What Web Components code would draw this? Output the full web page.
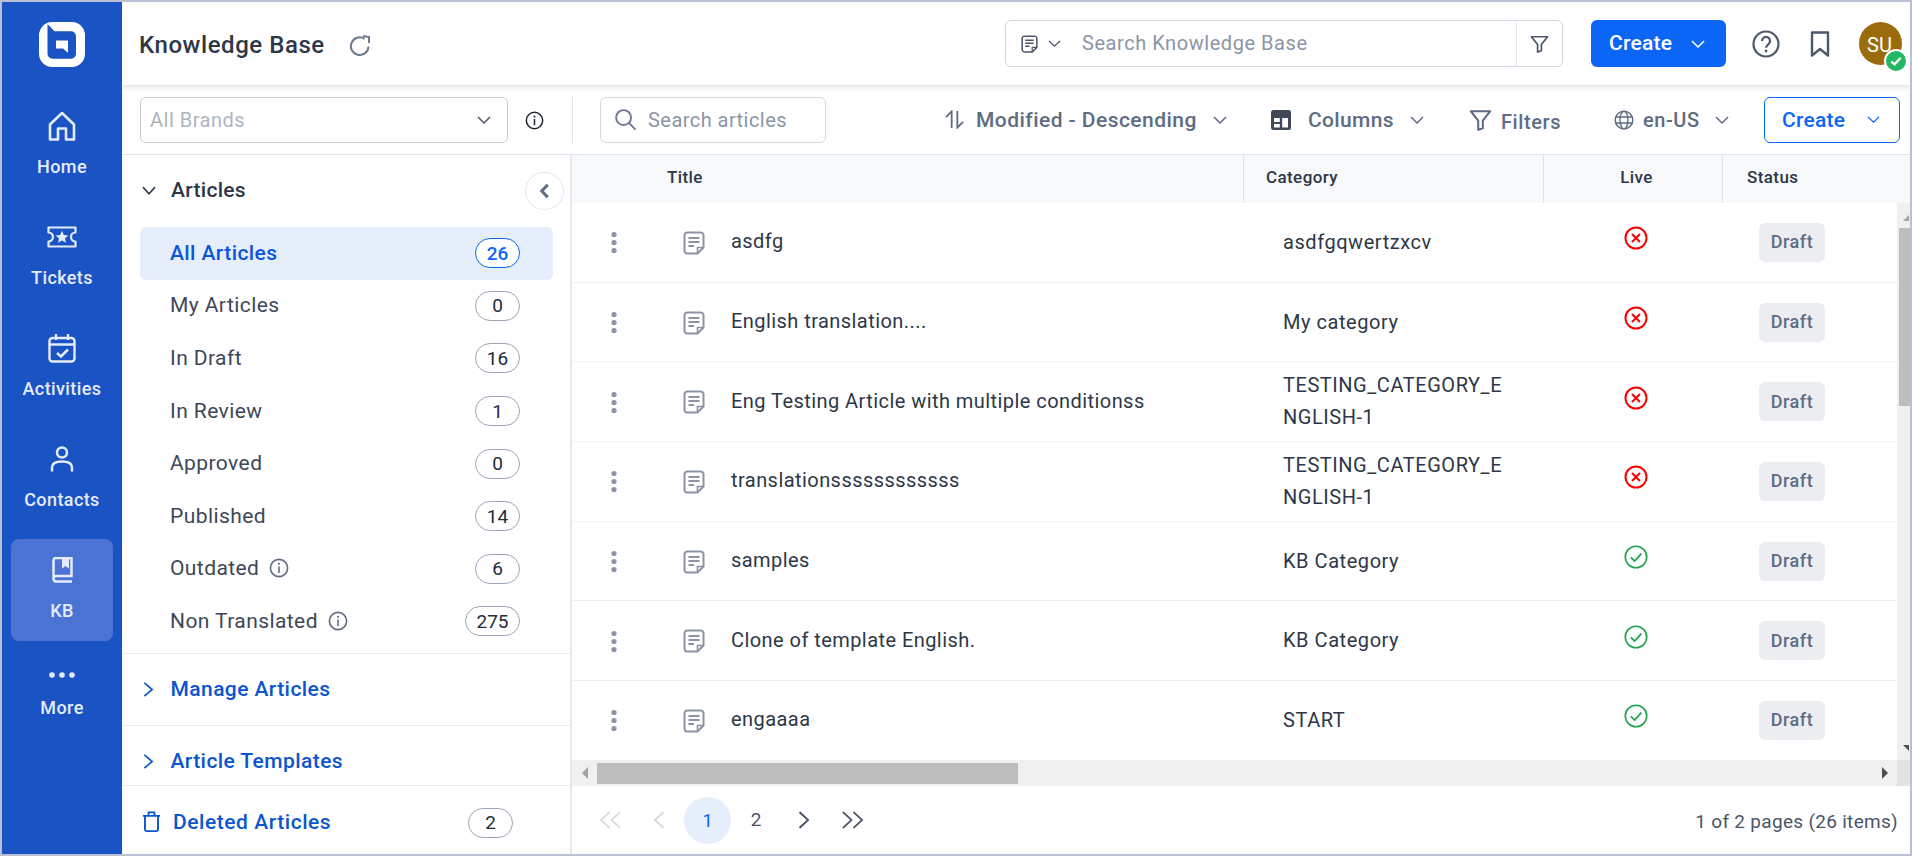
<!DOCTYPE html>
<html><head><meta charset="utf-8"><title>Knowledge Base</title>
<style>
html,body{margin:0;padding:0;height:100%;background:#fff;overflow:hidden;font-family:Roboto,"Liberation Sans",sans-serif}
</style></head>
<body>
<kb-app>
  <kb-rail slot="rail">
    <rail-item icon="home" label="Home"></rail-item>
    <rail-item icon="ticket" label="Tickets"></rail-item>
    <rail-item icon="calendar" label="Activities"></rail-item>
    <rail-item icon="contact" label="Contacts"></rail-item>
    <rail-item icon="book" label="KB" active></rail-item>
    <rail-item icon="dots" label="More" compact></rail-item>
  </kb-rail>
  <kb-header slot="header"></kb-header>
  <kb-toolbar slot="toolbar"></kb-toolbar>
  <kb-nav slot="nav">
    <nav-item label="All Articles" count="26" active></nav-item>
    <nav-item label="My Articles" count="0"></nav-item>
    <nav-item label="In Draft" count="16"></nav-item>
    <nav-item label="In Review" count="1"></nav-item>
    <nav-item label="Approved" count="0"></nav-item>
    <nav-item label="Published" count="14"></nav-item>
    <nav-item label="Outdated" count="6" info></nav-item>
    <nav-item label="Non Translated" count="275" info></nav-item>
  </kb-nav>
  <kb-table slot="table">
    <kb-row name="asdfg" cat="asdfgqwertzxcv"></kb-row>
    <kb-row name="English translation...." cat="My category"></kb-row>
    <kb-row name="Eng Testing Article with multiple conditionss" cat="TESTING_CATEGORY_ENGLISH-1"></kb-row>
    <kb-row name="translationssssssssssss" cat="TESTING_CATEGORY_ENGLISH-1"></kb-row>
    <kb-row name="samples" cat="KB Category" live></kb-row>
    <kb-row name="Clone of template English." cat="KB Category" live></kb-row>
    <kb-row name="engaaaa" cat="START" live></kb-row>
  </kb-table>
  <kb-pager slot="pager"></kb-pager>
</kb-app>
<script>
const ICONS={
 logo:['0 0 46 44','<rect width="46" height="44" rx="13" fill="#fff"/><path d="M8.5 2L15.5 9H32a5 5 0 0 1 5 5V31a5 5 0 0 1-5 5H13.5a5 5 0 0 1-5-5Z" fill="#1a53c4"/><path d="M17 18H29V30L24 26H17Z" fill="#fff"/>'],
 home:['0 0 28 30','<path d="M2 13.5L14 2L26 13.5V28.5H18V17.5H10V28.5H2Z" fill="none" stroke="currentColor" stroke-width="2.6" stroke-linejoin="round"/>'],
 ticket:['0 0 30 22','<path d="M1.5 1.5H28.5V6.5a4.5 4.5 0 0 0 0 9V20.5H1.5V15.5a4.5 4.5 0 0 0 0-9Z" fill="none" stroke="currentColor" stroke-width="2.2" stroke-linejoin="round"/><path d="M15 4.8L16.9 8.9 21.3 9.4 18 12.4 19 16.8 15 14.5 11 16.8 12 12.4 8.7 9.4 13.1 8.9Z" fill="currentColor"/>'],
 calendar:['0 0 28 30','<rect x="1.5" y="5" width="25" height="23.5" rx="3" fill="none" stroke="currentColor" stroke-width="2.4"/><path d="M1.5 11.5H26.5M8 1V7M20 1V7" fill="none" stroke="currentColor" stroke-width="2.4"/><path d="M9 20L13 23.5L20 16.5" fill="none" stroke="currentColor" stroke-width="2.6"/>'],
 contact:['0 0 24 26','<circle cx="12" cy="6.5" r="5" fill="none" stroke="currentColor" stroke-width="2.5"/><path d="M2 25.5V21.5C2 17.5 6 15.5 12 15.5S22 17.5 22 21.5V25.5" fill="none" stroke="currentColor" stroke-width="2.5"/>'],
 book:['0 0 22 26','<path d="M2.5 20V3.5A2.5 2.5 0 0 1 5 1H20.5V19H5A2.8 2.8 0 0 0 2.5 22A2.8 2.8 0 0 0 5 24.5H21" fill="none" stroke="currentColor" stroke-width="2.5"/><path d="M11 1H18V11.5L14.5 9L11 11.5Z" fill="currentColor"/>'],
 dots:['0 0 26 6','<circle cx="3" cy="3" r="2.8" fill="currentColor"/><circle cx="13" cy="3" r="2.8" fill="currentColor"/><circle cx="23" cy="3" r="2.8" fill="currentColor"/>'],
 refresh:['0 0 22 22','<path d="M19.5 11.5A8.8 8.8 0 1 1 15.5 3.8" fill="none" stroke="currentColor" stroke-width="2"/><path d="M14 1L20 2V8" fill="none" stroke="currentColor" stroke-width="2"/>'],
 doc:['0 0 22 24','<path d="M14.5 22.5H4A3 3 0 0 1 1.5 20V4A3 3 0 0 1 4 1.5H18A3 3 0 0 1 20.5 4V16.5Z" fill="none" stroke="currentColor" stroke-width="2"/><path d="M14.5 22.5V16.5H20.5" fill="none" stroke="currentColor" stroke-width="1.6"/><path d="M5.5 7H16.5M5.5 11H16.5M5.5 15H11" fill="none" stroke="currentColor" stroke-width="2"/>'],
 funnel:['0 0 20 20','<path d="M1.5 2H18.5L12 10.5V17.5L8 19V10.5Z" fill="none" stroke="currentColor" stroke-width="1.8" stroke-linejoin="round"/>'],
 help:['0 0 28 28','<circle cx="14" cy="14" r="12.5" fill="none" stroke="currentColor" stroke-width="2.2"/><path d="M10 11a4 4 0 1 1 6.5 3.1c-1.5 1.1-2.5 1.9-2.5 3.6" fill="none" stroke="currentColor" stroke-width="2.2"/><circle cx="14" cy="21" r="1.4" fill="currentColor"/>'],
 bookmark:['0 0 20 26','<path d="M2 1.5H18V24.5L10 18L2 24.5Z" fill="none" stroke="currentColor" stroke-width="2.4" stroke-linejoin="round"/>'],
 info:['0 0 20 20','<circle cx="10" cy="10" r="8.6" fill="none" stroke="currentColor" stroke-width="1.6"/><path d="M10 8.5V15" stroke="currentColor" stroke-width="1.6"/><circle cx="10" cy="5.8" r="1.1" fill="currentColor"/>'],
 search:['0 0 24 24','<circle cx="10" cy="10" r="7.8" fill="none" stroke="currentColor" stroke-width="2"/><path d="M15.8 15.8L22.5 22.5" stroke="currentColor" stroke-width="2"/>'],
 sort:['0 0 20 20','<path d="M7 19V1.5L1 7.5" fill="none" stroke="currentColor" stroke-width="1.9"/><path d="M13 1V18.5L19 12.5" fill="none" stroke="currentColor" stroke-width="1.9"/>'],
 columns:['0 0 20 20','<rect width="20" height="20" rx="2.5" fill="currentColor"/><rect x="3" y="8" width="5.8" height="4" fill="#fff"/><rect x="3" y="14" width="5.8" height="3.5" fill="#fff"/><rect x="11.2" y="8" width="5.8" height="9.5" fill="#fff"/>'],
 globe:['0 0 20 20','<circle cx="10" cy="10" r="8.8" fill="none" stroke="currentColor" stroke-width="1.5"/><ellipse cx="10" cy="10" rx="4" ry="8.8" fill="none" stroke="currentColor" stroke-width="1.4"/><path d="M1.5 7H18.5M1.5 13H18.5" stroke="currentColor" stroke-width="1.4"/>'],
 down:['0 0 14 8','<path d="M1 1L7 7L13 1" fill="none" stroke="currentColor" stroke-width="1.5"/>'],
 right:['0 0 12 16','<path d="M1.5 1L10 8L1.5 15" fill="none" stroke="currentColor" stroke-width="1.8"/>'],
 left:['0 0 12 16','<path d="M10.5 1L2 8L10.5 15" fill="none" stroke="currentColor" stroke-width="1.8"/>'],
 dleft:['0 0 24 18','<path d="M11 1L2 9L11 17M22 1L13 9L22 17" fill="none" stroke="currentColor" stroke-width="1.7"/>'],
 dright:['0 0 24 18','<path d="M2 1L11 9L2 17M13 1L22 9L13 17" fill="none" stroke="currentColor" stroke-width="1.7"/>'],
 trash:['0 0 19 22','<path d="M1 5H18M6.5 5V1.5H12.5V5" fill="none" stroke="currentColor" stroke-width="1.8"/><path d="M3 5V19.5A1.8 1.8 0 0 0 4.8 21H14.2A1.8 1.8 0 0 0 16 19.5V5" fill="none" stroke="currentColor" stroke-width="1.9"/>'],
 xcircle:['0 0 24 24','<circle cx="12" cy="12" r="10.5" fill="none" stroke="currentColor" stroke-width="2"/><path d="M8 8L16 16M16 8L8 16" stroke="currentColor" stroke-width="2"/>'],
 ok:['0 0 24 24','<circle cx="12" cy="12" r="10.7" fill="none" stroke="currentColor" stroke-width="1.6"/><path d="M6.8 12.3L10.6 16L17.4 8.6" fill="none" stroke="currentColor" stroke-width="1.7"/>'],
 tick:['0 0 14 12','<path d="M1.5 6.5L5.2 10L12.5 2" fill="none" stroke="currentColor" stroke-width="2.6"/>'],
 vmore:['0 0 6 24','<circle cx="3" cy="3.5" r="2.6" fill="currentColor"/><circle cx="3" cy="11.5" r="2.6" fill="currentColor"/><circle cx="3" cy="19.5" r="2.6" fill="currentColor"/>'],
 back:['0 0 12 18','<path d="M9.5 2L3 9L9.5 16" fill="none" stroke="currentColor" stroke-width="3.4"/>']
};
class KBase extends HTMLElement{
  connectedCallback(){ if(!this.shadowRoot){ this.attachShadow({mode:'open'}); this.shadowRoot.innerHTML=this.markup(); } }
}
const ic=(n,w,h,st='')=>`<kb-icon name="${n}" w="${w}" h="${h}" style="${st}"></kb-icon>`;
customElements.define('kb-icon',class extends KBase{
  markup(){const [vb,b]=ICONS[this.getAttribute('name')];const w=this.getAttribute('w'),h=this.getAttribute('h');
    return `<style>:host{display:inline-flex;flex:none;width:${w}px;height:${h}px}svg{display:block;width:100%;height:100%}</style><svg viewBox="${vb}" preserveAspectRatio="none">${b}</svg>`;}
});
customElements.define('kb-app',class extends KBase{
  markup(){return `<style>
  :host{display:flex;box-sizing:border-box;width:1912px;height:856px;border:2px solid #b9c0d2;background:#fff;overflow:hidden;font-family:Roboto,"Liberation Sans",sans-serif}
  .main{flex:1;min-width:0;display:flex;flex-direction:column}
  .body{flex:1;min-height:0;display:flex}
  .right{flex:1;min-width:0;display:flex;flex-direction:column}
  </style><slot name="rail"></slot><div class="main"><slot name="header"></slot><slot name="toolbar"></slot>
  <div class="body"><slot name="nav"></slot><div class="right"><slot name="table"></slot><slot name="pager"></slot></div></div></div>`;}
});
customElements.define('kb-rail',class extends KBase{
  markup(){return `<style>:host{display:flex;flex-direction:column;align-items:center;flex:none;width:120px;background:#1a53c4}
  .logo{margin-top:20px;margin-bottom:28px;height:45px;display:flex}</style>
  <div class="logo">${ic('logo',46,45)}</div><slot></slot>`;}
});
customElements.define('rail-item',class extends KBase{
  markup(){const n=this.getAttribute('icon'),l=this.getAttribute('label');
    const sz={home:[28,30],ticket:[30,22],calendar:[28,30],contact:[24,26],book:[22,26],dots:[26,6]}[n];
    const active=this.hasAttribute('active'),compact=this.hasAttribute('compact');
    return `<style>:host{display:flex;flex-direction:column;align-items:center;box-sizing:border-box;width:102px;height:102px;margin-bottom:9px;border-radius:8px;color:#e4ecfb;padding-top:${compact?12:16}px;${active?'background:#4a73d3;':''}${compact?'margin-top:-9px;':''}}
    .i{height:${compact?44:30}px;display:flex;align-items:center;justify-content:center}
    .t{margin-top:${compact?1:16}px;font-size:18px;line-height:20px;font-weight:500;letter-spacing:.4px;white-space:nowrap}</style>
    <div class="i">${ic(n,sz[0],sz[1])}</div><div class="t">${l}</div>`;}
});
customElements.define('kb-header',class extends KBase{
  markup(){return `<style>:host{display:flex;align-items:center;flex:none;height:83px;box-sizing:border-box;padding:0 8px 0 17px;background:#fff;box-shadow:0 2px 5px rgba(90,105,135,.22);position:relative;z-index:2}
  .title{font-size:24px;font-weight:500;color:#2d3748;letter-spacing:.55px;white-space:nowrap;padding-top:3px}
  .sb{margin-left:auto;width:558px;height:47px;box-sizing:border-box;border:1px solid #d3d9e4;border-radius:6px;display:flex;align-items:center}
  .ph{margin-left:21px;flex:1;font-size:20px;color:#8b95a7;letter-spacing:.55px;white-space:nowrap;padding-bottom:2px}
  .f{width:45px;height:100%;border-left:1px solid #e2e6ed;display:flex;align-items:center;justify-content:center;color:#4c586b}
  .c{margin-left:28px;width:135px;height:47px;box-sizing:border-box;border-radius:6px;background:#0b66f5;color:#fff;display:flex;align-items:center;padding-left:18px;font-size:21px;font-weight:500;letter-spacing:.25px}
  .c span{padding-bottom:2px}
  .av{margin-left:29px;width:43px;height:43px;border-radius:50%;background:#9a6c0b;color:#fff;font-size:20px;display:flex;align-items:center;justify-content:center;position:relative;padding-top:2px;padding-right:2px;box-sizing:border-box}
  .bd{position:absolute;right:-6px;bottom:-8px;width:20px;height:20px;border:2px solid #fff;border-radius:50%;background:#21b864;color:#fff;display:flex;align-items:center;justify-content:center}
  </style>
  <div class="title">Knowledge Base</div>${ic('refresh',22,22,'margin-left:24px;margin-top:4px;color:#6b7a90')}
  <div class="sb">${ic('doc',17,18,'margin-left:15px;color:#4c586b')}${ic('down',13,7,'margin-left:10px;color:#4c586b')}<div class="ph">Search Knowledge Base</div><div class="f">${ic('funnel',19,18)}</div></div>
  <div class="c"><span>Create</span>${ic('down',14,8,'margin-left:19px;color:#fff')}</div>
  ${ic('help',28,28,'margin-left:26px;color:#4c586b')}${ic('bookmark',20,26,'margin-left:30px;color:#4c586b')}
  <div class="av">SU<div class="bd">${ic('tick',12,10)}</div></div>`;}
});
customElements.define('kb-toolbar',class extends KBase{
  markup(){return `<style>:host{display:flex;align-items:center;flex:none;height:70px;box-sizing:border-box;padding:0 10px 0 18px;border-bottom:1px solid #dfe4ec;color:#5e6c84;font-size:20px;font-weight:500;white-space:nowrap}
  .sel{width:368px;height:46px;box-sizing:border-box;border:1px solid #c6cdd9;border-radius:6px;display:flex;align-items:center;padding:0 16px 0 9px;font-weight:400;color:#adb5c2;letter-spacing:.5px}
  .sep{margin-left:28px;width:1px;height:46px;background:#dfe4ec}
  .s{margin-left:27px;width:226px;height:46px;box-sizing:border-box;border:1px solid #d3d9e4;border-radius:6px;display:flex;align-items:center;padding-left:13px;font-weight:400;color:#8b95a7;letter-spacing:.45px}
  .g{display:flex;align-items:center;flex:none}
  .o{width:136px;height:46px;box-sizing:border-box;border:1px solid #0b66f5;border-radius:6px;color:#0b66f5;padding-left:17px;font-weight:500;font-size:21px;letter-spacing:.25px}
  .sp{margin-left:auto}
  </style>
  <div class="sel"><span style="flex:1">All Brands</span>${ic('down',14,8,'color:#4c586b')}</div>
  ${ic('info',19,19,'margin-left:17px;margin-top:2px;color:#1f2735')}<div class="sep"></div>
  <div class="s">${ic('search',23,23,'color:#6b7a90;margin-right:11px')}Search articles</div>
  <div class="g sp" style="width:282px;">${ic('sort',19,19)}<span style="margin-left:12px;letter-spacing:.45px;font-size:21px;padding-top:1px">Modified - Descending</span>${ic('down',14,8,'margin-left:auto')}</div>
  <div class="g" style="width:153px;margin-left:44px">${ic('columns',20,20,'color:#3e4957')}<span style="margin-left:17px;letter-spacing:.35px;font-size:21px">Columns</span>${ic('down',14,8,'margin-left:auto')}</div>
  <div class="g" style="width:94px;margin-left:45px;">${ic('funnel',23,22)}<span style="margin-left:9px;letter-spacing:.6px;padding-top:4px">Filters</span></div>
  <div class="g" style="width:115px;margin-left:51px">${ic('globe',20,20)}<span style="margin-left:9px;letter-spacing:.55px;padding-top:1px">en-US</span>${ic('down',14,8,'margin-left:auto')}</div>
  <div class="g o" style="margin-left:35px">Create${ic('down',13,7,'margin-left:22px')}</div>`;}
});
customElements.define('kb-nav',class extends KBase{
  markup(){return `<style>:host{display:flex;flex-direction:column;flex:none;width:450px;box-sizing:border-box;border-right:2px solid #e4e8ef;position:relative;font-size:21px;white-space:nowrap}
  .h{height:72px;flex:none;display:flex;align-items:center;padding-left:20px;color:#2d3748;font-weight:500;letter-spacing:.3px;box-sizing:border-box;padding-bottom:2px}
  .list{display:block;flex:none;height:426px}
  .sec{flex:none;display:flex;align-items:center;box-sizing:border-box;padding-left:21px;color:#0b55d0;font-weight:500;letter-spacing:.42px;border-top:1px solid #eaedf2}
  .b{margin-left:auto;margin-right:57px;width:45px;height:30px;box-sizing:border-box;border:1px solid #9aa5b8;border-radius:15px;display:flex;align-items:center;justify-content:center;color:#252c3a;font-size:19px;font-weight:400;letter-spacing:0}
  .col{position:absolute;left:403px;top:17px;width:39px;height:38px;box-sizing:border-box;border:1px solid #e4e8ef;border-radius:50%;background:#fff;display:flex;align-items:center;justify-content:center;color:#5e6c84}
  </style>
  <div class="h">${ic('down',14,9,'margin-right:15px;color:#2d3748')}Articles</div>
  <div class="list"><slot></slot></div>
  <div class="sec" style="height:72px;padding-bottom:2px">${ic('right',11,15,'margin-right:16.5px;margin-top:2px')}Manage Articles</div>
  <div class="sec" style="height:60px;padding-top:10px">${ic('right',11,15,'margin-right:16.5px;margin-top:2px')}Article Templates</div>
  <div class="sec" style="flex:1;padding-left:20px;padding-top:3px;letter-spacing:.55px">${ic('trash',19,21,'margin-right:12px')}Deleted Articles<div class="b" style="margin-top:2px">2</div></div>
  <div class="col">${ic('back',11,16)}</div>`;}
});
customElements.define('nav-item',class extends KBase{
  markup(){const a=this.hasAttribute('active');const c=this.getAttribute('count');
    return `<style>:host{display:flex;align-items:center;box-sizing:border-box;margin-left:18px;width:413px;height:52.6px;padding:0 33px 0 30px;border-radius:6px;font-size:21px;letter-spacing:.42px;white-space:nowrap;${a?'background:#e6eefc;color:#0b55d9;font-weight:500;':'color:#3d4759;'}}
    .l{padding-bottom:1px;display:flex;align-items:center}
    .b{margin-left:auto;min-width:45px;height:30px;padding:0 ${c.length>2?'10.5':'0'}px;box-sizing:border-box;border:1px solid ${a?'#0b66f5':'#9aa5b8'};border-radius:15px;display:flex;align-items:center;justify-content:center;color:${a?'#0b66f5':'#252c3a'};font-size:19px;letter-spacing:0;${a?'font-weight:500;':''}background:${a?'#fff':'transparent'}}</style>
    <div class="l">${this.getAttribute('label')}${this.hasAttribute('info')?ic('info',20,20,'margin-left:10px;color:#5e6c84'):''}</div><div class="b">${c}</div>`;}
});
customElements.define('kb-table',class extends KBase{
  markup(){return `<style>:host{display:flex;flex-direction:column;flex:1;min-height:0;font-family:inherit}
  .hd{display:grid;grid-template-columns:671px 300px 179px 1fr;height:48px;flex:none;background:#f8f9fb;font-size:17px;font-weight:500;color:#2d3748;letter-spacing:.4px}
  .hd>div{display:flex;align-items:center;box-sizing:border-box;padding-bottom:4px}
  .bd{flex:1;min-height:0;display:flex}
  .rows{flex:1;min-width:0;overflow:hidden}
  .v{width:13px;flex:none;background:#f0f0f0;display:flex;flex-direction:column;align-items:flex-end}
  .vt{width:11px;height:178px;background:#bdbdbd;margin-top:25px}
  .h{height:26px;flex:none;background:#f0f0f0;display:flex;align-items:center}
  .ht{width:421px;height:21px;background:#bdbdbd;margin-left:9px}
  .corner{width:13px;height:26px;margin-left:auto;background:#e3e3e3}
  svg{display:block}
  </style>
  <div class="hd"><div style="padding-left:95px">Title</div><div style="padding-left:22px;border-left:1px solid #dfe4ec">Category</div><div style="justify-content:center;padding-left:7px;border-left:1px solid #dfe4ec">Live</div><div style="padding-left:24px;border-left:1px solid #dfe4ec">Status</div></div>
  <div class="bd"><div class="rows"><slot></slot></div><div class="v">
    <svg width="7" height="6" style="margin-top:12px;margin-bottom:-18px"><polygon points="6,0 6,6 0,6" fill="#a3a3a3"/></svg>
    <div class="vt"></div><div style="flex:1"></div>
    <svg width="7" height="6" style="margin-bottom:9px"><polygon points="0,0 6,0 6,6" fill="#505050"/></svg>
  </div></div>
  <div class="h"><svg width="6" height="12" style="margin-left:10px"><polygon points="6,0 6,12 0,6" fill="#a3a3a3"/></svg><div class="ht"></div>
  <svg width="6" height="12" style="margin-left:auto;margin-right:9px"><polygon points="0,0 6,6 0,12" fill="#505050"/></svg><div class="corner" style="margin-left:0"></div></div>`;}
});
customElements.define('kb-row',class extends KBase{
  markup(){const live=this.hasAttribute('live');
    return `<style>:host{display:grid;grid-template-columns:671px 300px 179px 1fr;height:79.7px;box-sizing:border-box;border-bottom:1px solid #eef0f4;align-items:center;font-size:20px;color:#2d3748;letter-spacing:.44px}
    .a{display:flex;align-items:center;padding-left:39px}
    .n{margin-left:26px;white-space:nowrap;padding-bottom:2px}
    .c{padding-left:40px;width:266px;box-sizing:border-box;line-height:32px;word-break:break-all;padding-bottom:1px;letter-spacing:.55px}
    .l{display:flex;justify-content:center;padding-left:7px;padding-bottom:8px;color:${live?'#1fa34a':'#f00'}}
    .s{margin-left:37px;width:66px;height:39px;border-radius:6px;background:#ebedf1;color:#5e6c84;display:flex;align-items:center;justify-content:center;font-size:18px;font-weight:500;letter-spacing:.5px;padding-bottom:1px;box-sizing:border-box}
    </style>
    <div class="a">${ic('vmore',6,24,'color:#8a94a6;margin-top:2px')}${ic('doc',22,24,'margin-left:66px;margin-top:1px;color:#8a94a6')}<span class="n">${this.getAttribute('name')}</span></div>
    <div class="c">${this.getAttribute('cat')}</div>
    <div class="l">${ic(live?'ok':'xcircle',24,24)}</div>
    <div><div class="s">Draft</div></div>`;}
});
customElements.define('kb-pager',class extends KBase{
  markup(){return `<style>:host{display:flex;align-items:center;flex:none;height:68px;box-sizing:border-box;padding:0 12px 0 15px;color:#4a5568;font-size:19px}
  .p{width:47px;height:47px;margin-right:1.5px;border-radius:50%;display:flex;align-items:center;justify-content:center;flex:none}
  .on{background:#e6eefc;color:#0b66f5}
  .t{margin-left:auto;letter-spacing:.3px;padding-top:2px}
  </style>
  <div class="p" style="color:#d5dae3">${ic('dleft',23,18)}</div><div class="p" style="color:#d5dae3">${ic('left',12,18)}</div>
  <div class="p on">1</div><div class="p"><span style="padding-bottom:2px">2</span></div><div class="p">${ic('right',12,18,'margin-right:1px')}</div><div class="p" style="margin-left:-1px">${ic('dright',23,18)}</div>
  <div class="t">1 of 2 pages (26 items)</div>`;}
});
</script>
</body></html>
